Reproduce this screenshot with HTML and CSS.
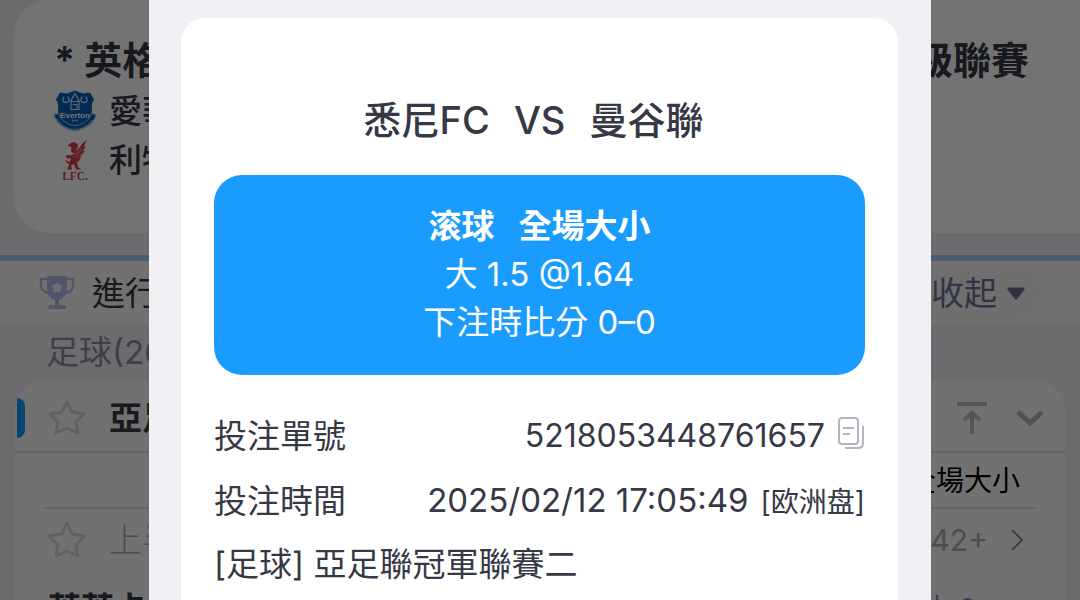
FILE: index.html
```html
<!DOCTYPE html>
<html lang="zh-Hant">
<head>
<meta charset="utf-8">
<meta name="viewport" content="width=device-width, initial-scale=1">
<title>投注詳情</title>
<link rel="stylesheet" href="styles.css">
</head>
<body>
<div class="screen">
  <main class="page" aria-hidden="true">
    <section class="featured">
      <header class="featured-head"><h2>* 英格</h2><h2>超級聯賽</h2></header>
      <div class="team">
        <svg class="crest" viewBox="1 1 42 41" aria-hidden="true">
          <path d="M7 3 14 4 22 1 30 4 37 3 41 10Q38 14 39 20Q39 32 22 40Q5 32 5 20Q6 14 3 10Z" fill="#0560b8"/>
          <path d="M1 25Q3 33 10 37Q22 45 34 37Q41 33 43 25L38 24Q37 30 31 33Q22 39 13 33Q7 30 6 24Z" fill="#0560b8" stroke="#a9c4e8" stroke-width="1"/>
          <path d="M4 30Q12 40 22 40T40 30" fill="none" stroke="#d8e5f6" stroke-width="1.4" stroke-dasharray="1.2 1.2"/>
          <path d="M11 7q-3 6 2 6t2-6M29 7q-3 6 2 6t2-6" fill="none" stroke="#d8e5f6" stroke-width="1.2"/>
          <path d="M22 4 26 11V20H18V11ZM18 12H26M20 15h4v4" fill="none" stroke="#d8e5f6" stroke-width="1.2"/>
          <text x="22" y="28" text-anchor="middle" class="crest-name">Everton</text>
          <path d="M19 31H25" stroke="#d8e5f6" stroke-width="1.4" stroke-dasharray="1 .6"/>
        </svg>
        <span>愛華頓</span>
      </div>
      <div class="team">
        <svg class="crest" viewBox="0 0 44 44" aria-hidden="true">
          <path d="M18 8 14 7 18 4Q23 2 25 6Q26 9 22 12Q26 11 28 7Q30 4 34 1L31 9 34 7 30 13 33 12 28 18Q28 23 24 24L25 29 29 32H23L21 26 18 28 19 32H14L16 26Q13 26 12 22L16 24 18 20Q13 22 12 17L18 17 22 15Q17 15 18 11Z" fill="#d8434a"/>
          <path d="M26 10Q24 17 19 20M29 10 23 19M31 14 24 21" fill="none" stroke="#f3aaa5" stroke-width="0.8"/>
          <text x="22" y="43" text-anchor="middle" class="crest-lfc">LFC.</text>
        </svg>
        <span>利物浦</span>
      </div>
    </section>

    <section class="toolbar">
      <svg class="trophy" viewBox="0 0 36 36" aria-hidden="true">
        <path d="M8 1H28V13Q28 22 20 25V30H25Q27 30 27 34H9Q9 30 12 30H16V25Q8 22 8 13Z" fill="#b4bce8"/>
        <path d="M8 4H2V10Q2 17 10 18M28 4H34V10Q34 17 26 18" fill="none" stroke="#b4bce8" stroke-width="2.4"/>
        <path d="M18 8 20 10 23 11 21 14 21 17 18 16 15 17 15 14 13 11 16 10Z" fill="#f4f5fb" stroke="#f4f5fb" stroke-linejoin="round"/>
      </svg>
      <span class="toolbar-title">進行中</span>
      <button class="collapse" type="button">收起
        <svg class="caret" viewBox="0 0 18 13" aria-hidden="true"><path d="M2 2H16L9 11Z" fill="#6f6f99" stroke="#6f6f99" stroke-width="3" stroke-linejoin="round"/></svg>
      </button>
    </section>

    <h3 class="sport">足球(26)</h3>

    <section class="league">
      <header class="league-head">
        <i class="marker"></i>
        <svg class="star" viewBox="0 0 40 40" aria-hidden="true"><path d="M20 4 25 14 37 16 29 24 31 35 20 30 9 35 11 24 3 16 15 14Z"/></svg>
        <strong>亞足</strong>
        <svg class="to-top" viewBox="0 0 32 34" aria-hidden="true"><path d="M1 3H31M16 33V13M8 19 16 12 24 19"/></svg>
        <svg class="chevron" viewBox="0 0 30 20" aria-hidden="true"><path d="M3 4 15 15 27 4"/></svg>
      </header>
      <div class="market">全場大小</div>
      <div class="match">
        <svg class="star" viewBox="0 0 40 40" aria-hidden="true"><path d="M20 3 25 14 38 16 29 25 31 36 20 31 9 36 11 25 2 16 15 14Z"/></svg>
        <span class="period">上半場</span>
        <span class="more">42+</span>
        <svg class="next" viewBox="0 0 14 24" aria-hidden="true"><path d="M2 2 12 12 2 22"/></svg>
      </div>
      <div class="lineup"><strong>萊萊卡</strong><span class="odds">大 2</span></div>
    </section>
  </main>

  <div class="backdrop">
    <section class="modal" role="dialog" aria-modal="true" aria-labelledby="match-title">
      <article class="ticket">
        <h1 id="match-title"><span>悉尼FC</span><span>VS</span><span>曼谷聯</span></h1>
        <div class="bet">
          <p class="bet-type"><span>滚球</span><span>全場大小</span></p>
          <p>大 1.5 @1.64</p>
          <p>下注時比分 0–0</p>
        </div>
        <dl class="details">
          <div class="detail">
            <dt>投注單號</dt>
            <dd><span class="ticket-id">5218053448761657</span>
              <button class="copy" type="button" aria-label="複製">
                <svg viewBox="0 0 28 34" aria-hidden="true"><path d="M5 2H18Q21 2 21 5V25Q21 28 18 28H5Q2 28 2 25V5Q2 2 5 2ZM6 12H17M6 18H13M26 10V27Q26 32 21 32H8"/></svg>
              </button>
            </dd>
          </div>
          <div class="detail">
            <dt>投注時間</dt>
            <dd>2025/02/12 17:05:49 <small>[欧洲盘]</small></dd>
          </div>
        </dl>
        <p class="competition">[足球] 亞足聯冠軍聯賽二</p>
      </article>
    </section>
  </div>
</div>
</body>
</html>
```
FILE: styles.css
```css
* { box-sizing: border-box; }

body, h1, h2, h3, p, dl, dd { margin: 0; }

body {
  font-family: Inter, "Noto Sans CJK TC", sans-serif;
  font-size: 33px;
  line-height: 48px;
  color: #363845;
}

button {
  border: 0;
  padding: 0;
  background: none;
  font: inherit;
  color: inherit;
}

svg { flex: none; fill: none; }

.screen {
  position: relative;
  height: 100vh;
  overflow: hidden;
}

.page { background: #f0f0f5; }

/* Featured matches */
.featured {
  margin-left: 14px;
  height: 233px;
  padding: 36px 51px 0 40px;
  border-radius: 36px 0 0 36px;
  background: #ffffff;
}

.featured-head {
  display: flex;
  justify-content: space-between;
  margin-bottom: 2px;
}

.featured h2 {
  font-size: 38px;
  font-weight: 700;
  line-height: 48px;
}

.team {
  display: flex;
  align-items: center;
  gap: 13px;
  height: 49px;
  font-weight: 500;
}

.crest { width: 42px; height: 42px; }
.crest-name { font: bold 8px "Liberation Sans", sans-serif; fill: #ffffff; }
.crest-lfc { font: bold 12px "Liberation Serif", serif; fill: #d8434a; }

/* Section toolbar */
.toolbar {
  display: flex;
  align-items: center;
  gap: 17px;
  height: 70px;
  margin-top: 22px;
  padding: 0 40px 0 39px;
  border-top: 6px solid #a2cdfa;
  background: #fafafa;
}

.trophy { width: 36px; height: 36px; }
.toolbar-title { font-weight: 400; }

.collapse {
  display: flex;
  align-items: center;
  gap: 10px;
  height: 54px;
  margin-left: auto;
  padding: 0 15px 0 24px;
  border-radius: 27px;
  background: #f5f5f5;
  color: #6f6f99;
}

.caret { width: 18px; height: 13px; }

.sport {
  padding: 3px 46px 5px;
  font-size: 33px;
  font-weight: 400;
  color: #8b8ba8;
}

/* League list */
.league {
  margin: 0 15px;
  overflow: hidden;
  border-radius: 28px 28px 0 0;
  background: #fafafa;
}

.league-head {
  display: flex;
  align-items: center;
  height: 72px;
  padding: 4px 20px 0 2px;
  border-bottom: 2px solid #dedee4;
}

.league-head strong { margin: 0 auto 0 22px; font-weight: 700; }

.marker {
  width: 8px;
  height: 40px;
  margin-right: 22px;
  border-radius: 0 8px 8px 0;
  background: #1a9cff;
}

.star { width: 40px; height: 40px; stroke: #d6d6e0; stroke-width: 3; stroke-linejoin: round; }
.to-top { width: 32px; height: 34px; margin-right: 27px; stroke: #bcbcc6; stroke-width: 4; }
.chevron { width: 30px; height: 20px; stroke: #b4b4bc; stroke-width: 5; }

.market {
  height: 56px;
  margin: 0 29px;
  padding: 4px 16px 0 0;
  border-bottom: 2px solid #dedee4;
  font-size: 28px;
  text-align: right;
  color: #000000;
}

.match {
  display: flex;
  align-items: center;
  height: 62px;
  padding: 0 41px 0 32px;
  color: #a8a8b8;
}

.period { margin: 0 auto 0 22px; font-weight: 300; }
.more { margin-right: 22px; font-size: 30px; }
.next { width: 14px; height: 24px; stroke: #8c8c96; stroke-width: 2; }

.lineup {
  display: flex;
  justify-content: space-between;
  margin: 0 29px;
  padding: 14px 60px 0 4px;
}

.odds { font-size: 28px; color: #8b8ba8; }

/* Bet details dialog */
.backdrop {
  position: absolute;
  inset: 0;
  display: flex;
  justify-content: center;
  background: rgba(0, 0, 0, 0.55);
}

.modal {
  width: 72.4%;
  padding: 18px 33px 0 32px;
  background: #f0f0f5;
}

.ticket {
  min-height: 100%;
  padding: 78px 33px 10px;
  border-radius: 24px 24px 0 0;
  background: #ffffff;
}

.ticket h1 {
  display: flex;
  justify-content: center;
  gap: 24px;
  padding-right: 12px;
  font-size: 38px;
  font-weight: 500;
  line-height: 48px;
}

.bet {
  margin-top: 31px;
  padding: 27px 20px 29px;
  border-radius: 28px;
  background: #1a9cff;
  text-align: center;
  color: #ffffff;
}

.bet-type {
  display: flex;
  justify-content: center;
  gap: 24px;
  font-weight: 700;
}

.details { margin-top: 28px; }

.detail {
  display: flex;
  justify-content: space-between;
  align-items: center;
  height: 65px;
}

.detail dd {
  display: flex;
  align-items: baseline;
  gap: 12px;
}

.ticket-id { font-size: 32px; }
.detail small { font-size: 28px; }
.copy { align-self: flex-start; display: flex; padding-top: 4px; }
.copy svg { width: 28px; height: 34px; stroke: #b5b5c0; stroke-width: 2; }
.competition { padding-top: 7px; }
```
